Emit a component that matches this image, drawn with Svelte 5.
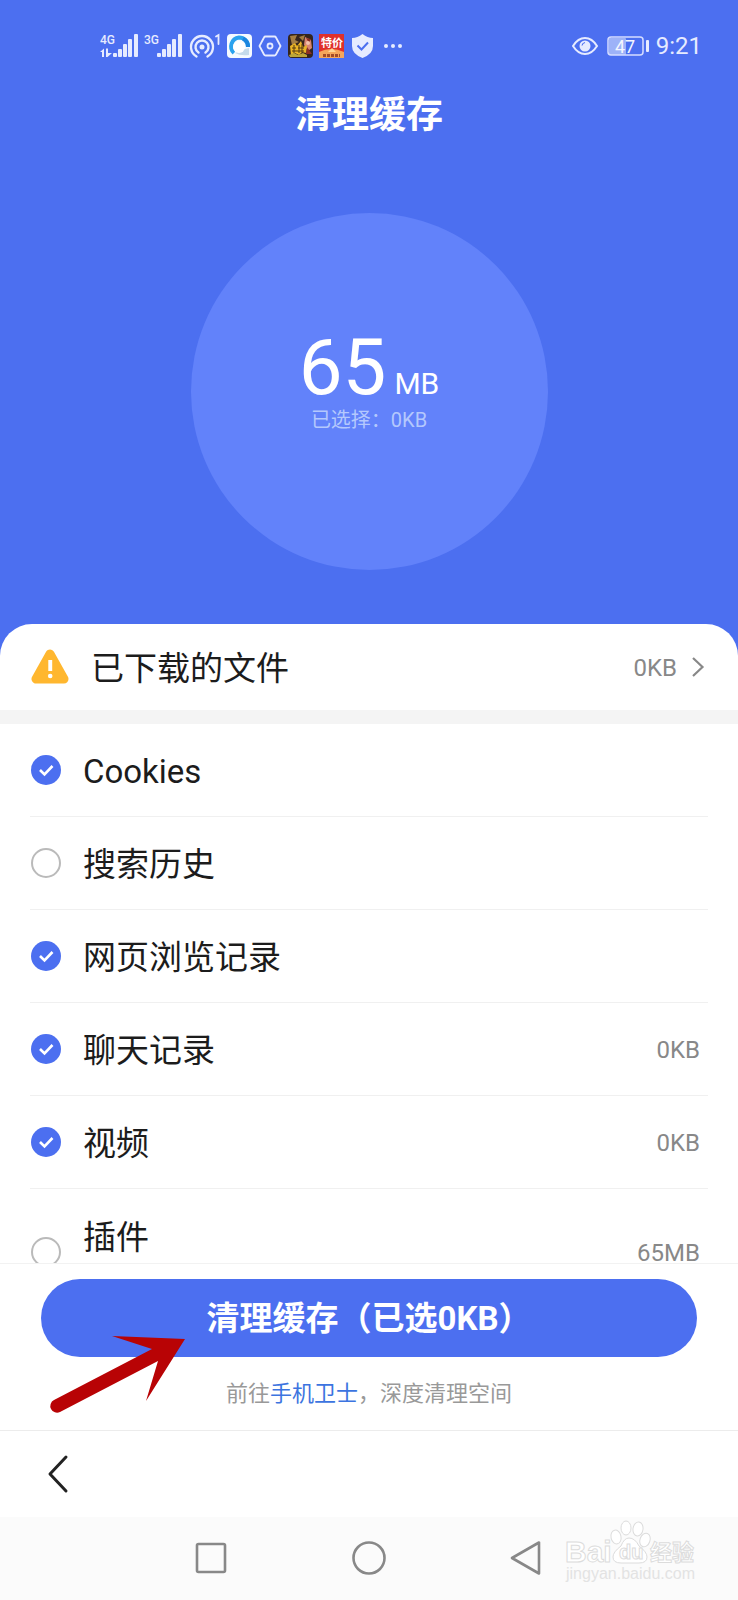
<script>
  let rows = $state([
    { id: 'cookies', label: 'Cookies', size: '', checked: true },
    { id: 'search', label: '搜索历史', size: '', checked: false },
    { id: 'history', label: '网页浏览记录', size: '', checked: true },
    { id: 'chat', label: '聊天记录', size: '0KB', checked: true },
    { id: 'video', label: '视频', size: '0KB', checked: true },
    { id: 'plugin', label: '插件', size: '65MB', checked: false, tall: true }
  ]);
</script>

{#snippet bars(name)}
  <svg width="38" height="26" viewBox="0 0 38 26" fill="#e6ebff">
    <text x="0" y="11" font-size="12" font-weight="500">{name}</text>
    <rect x="13" y="20" width="4" height="4" rx="1" />
    <rect x="18" y="16" width="4" height="8" rx="1" />
    <rect x="23" y="11" width="4" height="13" rx="1" />
    <rect x="28" y="6" width="4" height="18" rx="1" />
    <rect x="34" y="1" width="4" height="23" rx="1" />
    {#if name === '4G'}
      <path d="M0 19l4-3.500V24H2v-5zM6 15.500h2V20h4l-4.500 4H6z" />
    {/if}
  </svg>
{/snippet}

<div class="app">
  <header class="hero">
    <div class="status">
      <div class="group">
        {@render bars('4G')}
        {@render bars('3G')}
        <svg width="33" height="26" viewBox="0 0 33 26" fill="none" stroke="#e6ebff" stroke-width="2.400" stroke-linecap="round">
          <circle cx="14" cy="14" r="2.500" fill="#e6ebff" stroke="none" />
          <path d="M10.500 19.500a6.500 6.500 0 1 1 7 0M8.500 23.500a11 11 0 1 1 11 0" />
          <path d="M28 3.500l2.500-1.500v9" stroke-width="1.800" />
        </svg>
        <svg width="25" height="26" viewBox="0 0 25 26">
          <rect y="1" width="25" height="24" rx="4" fill="#f5faff" />
          <path d="M7 20A9 9 0 0 1 12 4.500 9 9 0 0 1 21 14" fill="none" stroke="#2aa2ee" stroke-width="4" />
          <path d="M21 14a9 9 0 0 0-5-8.500" fill="none" stroke="#1b86df" stroke-width="4" />
          <path d="M14 17l8-2v7q-9 1-14-2z" fill="#c5dbeb" />
          <circle cx="12" cy="14" r="6" fill="#fff" />
        </svg>
        <svg width="24" height="26" viewBox="0 0 24 26" fill="none" stroke="#e6ebff" stroke-width="1.800">
          <path d="M7.500 3.500h9q1 0 1.500 1l4.500 8.500-4.500 8.500q-.5 1-1.500 1h-9q-1 0-1.500-1L1.500 13 6 4.500q.5-1 1.500-1z" stroke-linejoin="round" />
          <circle cx="12" cy="13" r="2.500" />
        </svg>
        <svg width="25" height="26" viewBox="0 0 25 26">
          <rect y="1" width="25" height="24" rx="4" fill="#35251d" />
          <path d="M2 3l7-1-2 5 4 2-7 3zM11 4l6-2-2 6z" fill="#a47e43" />
          <path d="M17 4l6 3 1 8-4 3-4-6z" fill="#d98570" />
          <path d="M18 5l5 1-2 4zM19 14l5 7h-6z" fill="#8d2f24" />
          <path d="M2 13l5-3 2 3 4-5 2 6 4-2-1 8-4-1-3 3-4-2-4 2z" fill="#e9b426" />
          <path d="M4 15h4M6 12v8M11 12v8M10 15h6M14 11v8M4 18h12" stroke="#553a13" stroke-width="1" />
          <path d="M1 22l5-2 4 2 5-2 4 2v2H2z" fill="#bba53a" />
          <circle cx="20" cy="10" r="2" fill="#f2c1aa" />
        </svg>
        <svg width="25" height="26" viewBox="0 0 25 26">
          <rect y="1" width="25" height="24" fill="#df302b" />
          <path d="M0 19q12-6 25 0v6H0z" fill="#f5a65b" />
          <path d="M9 19l4-4 4 4z" fill="#ffd795" />
          <path d="M4 22.500h17" stroke="#a34b28" stroke-width="3" stroke-dasharray="3 1" />
          <text x="2" y="14" font-size="11" font-weight="700" fill="#fff">特价</text>
        </svg>
        <svg width="25" height="26" viewBox="0 0 25 26">
          <path d="M12.500 1q5 4 10.500 4v8q0 8-10.500 12Q2 21 2 13V5q5.500 0 10.500-4z" fill="#e6ebff" />
          <path d="M7.500 12.500l4 4 6.500-7" fill="none" stroke="#4c6ff0" stroke-width="2" />
        </svg>
        <svg width="22" height="26" viewBox="0 0 22 26" fill="#e6ebff">
          <circle cx="5" cy="13" r="2" /><circle cx="12" cy="13" r="2" /><circle cx="19" cy="13" r="2" />
        </svg>
      </div>
      <div class="group right">
        <svg width="28" height="26" viewBox="0 0 28 26" fill="none" stroke="#e6ebff" stroke-width="2">
          <path d="M1 13q5-8 12-8t12 8q-5 8-12 8T1 13z" />
          <circle cx="13" cy="13" r="5.500" fill="#e6ebff" stroke="none" />
          <path d="M10 12.500q.5-2.500 3-3" stroke="#4c6ff0" stroke-width="1.200" />
        </svg>
        <svg width="44" height="26" viewBox="0 0 44 26">
          <rect x="3" y="5" width="17" height="17" rx="1" fill="#9db2f8" />
          <rect x="2" y="4" width="35" height="18" rx="3" fill="none" stroke="#d5ddff" stroke-width="1.500" />
          <rect x="40" y="7" width="3" height="12" rx="1" fill="#e6ebff" />
          <text x="9" y="20" font-size="18" fill="#f4f6ff">47</text>
        </svg>
        <time>9:21</time>
      </div>
    </div>

    <h1>清理缓存</h1>

    <div class="disc">
      <p class="total"><span class="num">65</span><span class="unit">MB</span></p>
      <p class="picked">已选择：0KB</p>
    </div>
  </header>

  <main>
    <button class="files" type="button">
      <svg width="38" height="36" viewBox="0 0 38 36">
        <path d="M19 5L5 30h28z" fill="#ffb72f" stroke="#ffb72f" stroke-width="9" stroke-linejoin="round" />
        <path d="M17.300 11h3.900v11h-3.900z" fill="#fff" />
        <circle cx="19.200" cy="27" r="2.300" fill="#fff" />
      </svg>
      <span class="name">已下载的文件</span>
      <span class="size">0KB</span>
      <svg class="chev" width="14" height="22" viewBox="0 0 14 22" fill="none" stroke="#888" stroke-width="2.200">
        <path d="M2 2l9.500 9L2 20" />
      </svg>
    </button>

    <ul>
      {#each rows as row (row.id)}
        <li class:tall={row.tall}>
          <span class="tick">
            <input id={row.id} type="checkbox" bind:checked={row.checked} />
            <svg width="30" height="30" viewBox="0 0 30 30" fill="none" stroke="#fff" stroke-width="2.600">
              <path d="M9 15l4.500 4.500 8-8.500" />
            </svg>
          </span>
          <label for={row.id}>{row.label}</label>
          <span class="size">{row.size}</span>
        </li>
      {/each}
    </ul>
  </main>

  <footer>
    <button class="clean" type="button">清理缓存（已选0KB）</button>
    <p class="tip">前往<a href="#guard">手机卫士</a>，深度清理空间</p>
    <svg class="arrow" width="150" height="90" viewBox="0 0 150 90" fill="#b80305">
      <path d="M14 70L112 19 72 6l73 3-39 62 12-40-98 51A6.600 6.600 0 0 1 14 70z" />
    </svg>
  </footer>

  <div class="toolbar">
    <button type="button" aria-label="返回">
      <svg width="24" height="40" viewBox="0 0 24 40" fill="none" stroke="#222" stroke-width="3" stroke-linecap="round" stroke-linejoin="round">
        <path d="M19 3L3 20l16 17" />
      </svg>
    </button>
  </div>

  <nav>
    <button type="button" aria-label="最近任务">
      <svg width="36" height="36" viewBox="0 0 36 36" fill="none" stroke="#888" stroke-width="2.600">
        <rect x="3" y="3" width="28" height="28" rx="1.500" />
      </svg>
    </button>
    <button type="button" aria-label="主页">
      <svg width="36" height="36" viewBox="0 0 36 36" fill="none" stroke="#888" stroke-width="2.600">
        <circle cx="18" cy="17" r="15.500" />
      </svg>
    </button>
    <button type="button" aria-label="后退">
      <svg width="36" height="36" viewBox="0 0 36 36" fill="none" stroke="#888" stroke-width="2.600" stroke-linejoin="round">
        <path d="M31 1.500v31L4 17z" />
      </svg>
    </button>
    <svg class="mark" width="140" height="70" viewBox="0 0 140 70" fill="#fff" stroke="#dcdcdc" stroke-width="1">
      <text x="5" y="46" font-size="30" font-weight="700">Bai</text>
      <ellipse cx="56" cy="21" rx="5" ry="7" transform="rotate(-12 56 21)" />
      <ellipse cx="66" cy="12" rx="5" ry="7" />
      <ellipse cx="78" cy="13" rx="5" ry="7" transform="rotate(8 78 13)" />
      <ellipse cx="85" cy="24" rx="5" ry="7" transform="rotate(20 85 24)" />
      <path d="M69 22q6 0 10 8 8 6 8 11 0 6-8 6H61q-8 0-8-6 0-5 8-11 3-8 8-8z" />
      <text x="59" y="43" font-size="20" font-weight="700">du</text>
      <text x="90" y="44" font-size="22" font-weight="700">经验</text>
      <text x="6" y="63" font-size="16" fill="#e3e3e3" stroke="none">jingyan.baidu.com</text>
    </svg>
  </nav>
</div>

<style>
  :global(body) {
    margin: 0;
  }
  .app {
    display: flex;
    flex-direction: column;
    height: 100vh;
    background: #4c6ff0;
    color: #1c1c1c;
    font-family: Roboto, 'Noto Sans CJK SC', sans-serif;
  }
  h1, p, ul {
    margin: 0;
    padding: 0;
  }
  svg {
    display: block;
    flex: none;
  }
  button {
    border: 0;
    padding: 0;
    background: none;
    font: inherit;
    color: inherit;
  }
  .hero {
    display: flex;
    flex-direction: column;
    align-items: center;
    padding-bottom: 54px;
    color: #fff;
  }
  .status {
    display: flex;
    align-self: stretch;
    justify-content: space-between;
    align-items: center;
    height: 92px;
    padding: 0 36px 0 100px;
  }
  .group {
    display: flex;
    align-items: center;
    gap: 6px;
  }
  time {
    font-size: 24px;
    line-height: 28px;
    color: #e6ebff;
  }
  h1 {
    font-size: 37px;
    line-height: 48px;
    font-weight: 700;
  }
  .disc {
    display: flex;
    flex-direction: column;
    align-items: center;
    box-sizing: border-box;
    width: 357px;
    height: 357px;
    margin-top: 73px;
    padding-top: 115px;
    border-radius: 50%;
    background: #6282fa;
  }
  .total {
    display: flex;
    align-items: baseline;
    gap: 8px;
    line-height: 80px;
  }
  .num {
    font-size: 78px;
  }
  .unit {
    font-size: 30px;
    line-height: 32px;
  }
  .picked {
    font-size: 20px;
    line-height: 24px;
    color: #b4c8fd;
  }
  main {
    display: flex;
    flex: 1;
    flex-direction: column;
    min-height: 0;
    border-radius: 32px 32px 0 0;
    background: #fff;
    overflow: hidden;
  }
  .files {
    display: flex;
    flex: none;
    align-items: center;
    height: 100px;
    padding: 0 33px 0 31px;
    border-bottom: 14px solid #f4f4f4;
    box-sizing: border-box;
    text-align: left;
  }
  .name {
    flex: 1;
    margin-left: 22px;
    padding-top: 4px;
    font-size: 33px;
    line-height: 48px;
  }
  .size {
    padding-top: 2px;
    font-size: 24px;
    line-height: 20px;
    color: #888;
  }
  .chev {
    margin-left: 14px;
  }
  ul {
    flex: 1;
    min-height: 0;
    overflow-y: auto;
    scrollbar-width: none;
    list-style: none;
  }
  li {
    display: flex;
    align-items: center;
    box-sizing: border-box;
    height: 93px;
    margin: 0 30px;
    padding: 0 8px 0 1px;
    border-bottom: 1px solid #f0f0f0;
  }
  .tall {
    height: 126px;
  }
  .tall label {
    align-self: flex-start;
    margin-top: 21px;
  }
  .tick {
    display: grid;
  }
  .tick > * {
    grid-area: 1 / 1;
  }
  .tick svg {
    pointer-events: none;
    visibility: hidden;
  }
  input {
    appearance: none;
    box-sizing: border-box;
    width: 30px;
    height: 30px;
    margin: 0;
    border: 2px solid #bababa;
    border-radius: 50%;
  }
  input:checked {
    border: 0;
    background: #4c6ff0;
  }
  input:checked + svg {
    visibility: visible;
  }
  label {
    flex: 1;
    margin-left: 22px;
    padding-top: 4px;
    font-size: 33px;
    line-height: 48px;
  }
  footer {
    position: relative;
    display: flex;
    flex-direction: column;
    padding: 15px 41px 20px;
    border-top: 1px solid #f2f2f2;
    background: #fff;
  }
  .clean {
    height: 78px;
    padding-top: 2px;
    border-radius: 39px;
    background: #4c6ff0;
    color: #fff;
    font-size: 33px;
    line-height: 48px;
    font-weight: 700;
  }
  .tip {
    margin-top: 21px;
    font-size: 22px;
    line-height: 32px;
    text-align: center;
    color: #999;
  }
  .tip a {
    color: #3c74e0;
    text-decoration: none;
  }
  .arrow {
    position: absolute;
    left: 40px;
    top: 66px;
    pointer-events: none;
  }
  .toolbar {
    display: flex;
    align-items: center;
    height: 86px;
    padding-left: 47px;
    border-top: 1px solid #ececec;
    background: #fff;
  }
  nav {
    position: relative;
    display: flex;
    justify-content: center;
    align-items: center;
    gap: 121px;
    height: 83px;
    background: #fbfbfb;
  }
  .mark {
    position: absolute;
    right: 38px;
    bottom: 14px;
    pointer-events: none;
    font-family: 'Liberation Sans', 'Noto Sans CJK SC', sans-serif;
  }
</style>
